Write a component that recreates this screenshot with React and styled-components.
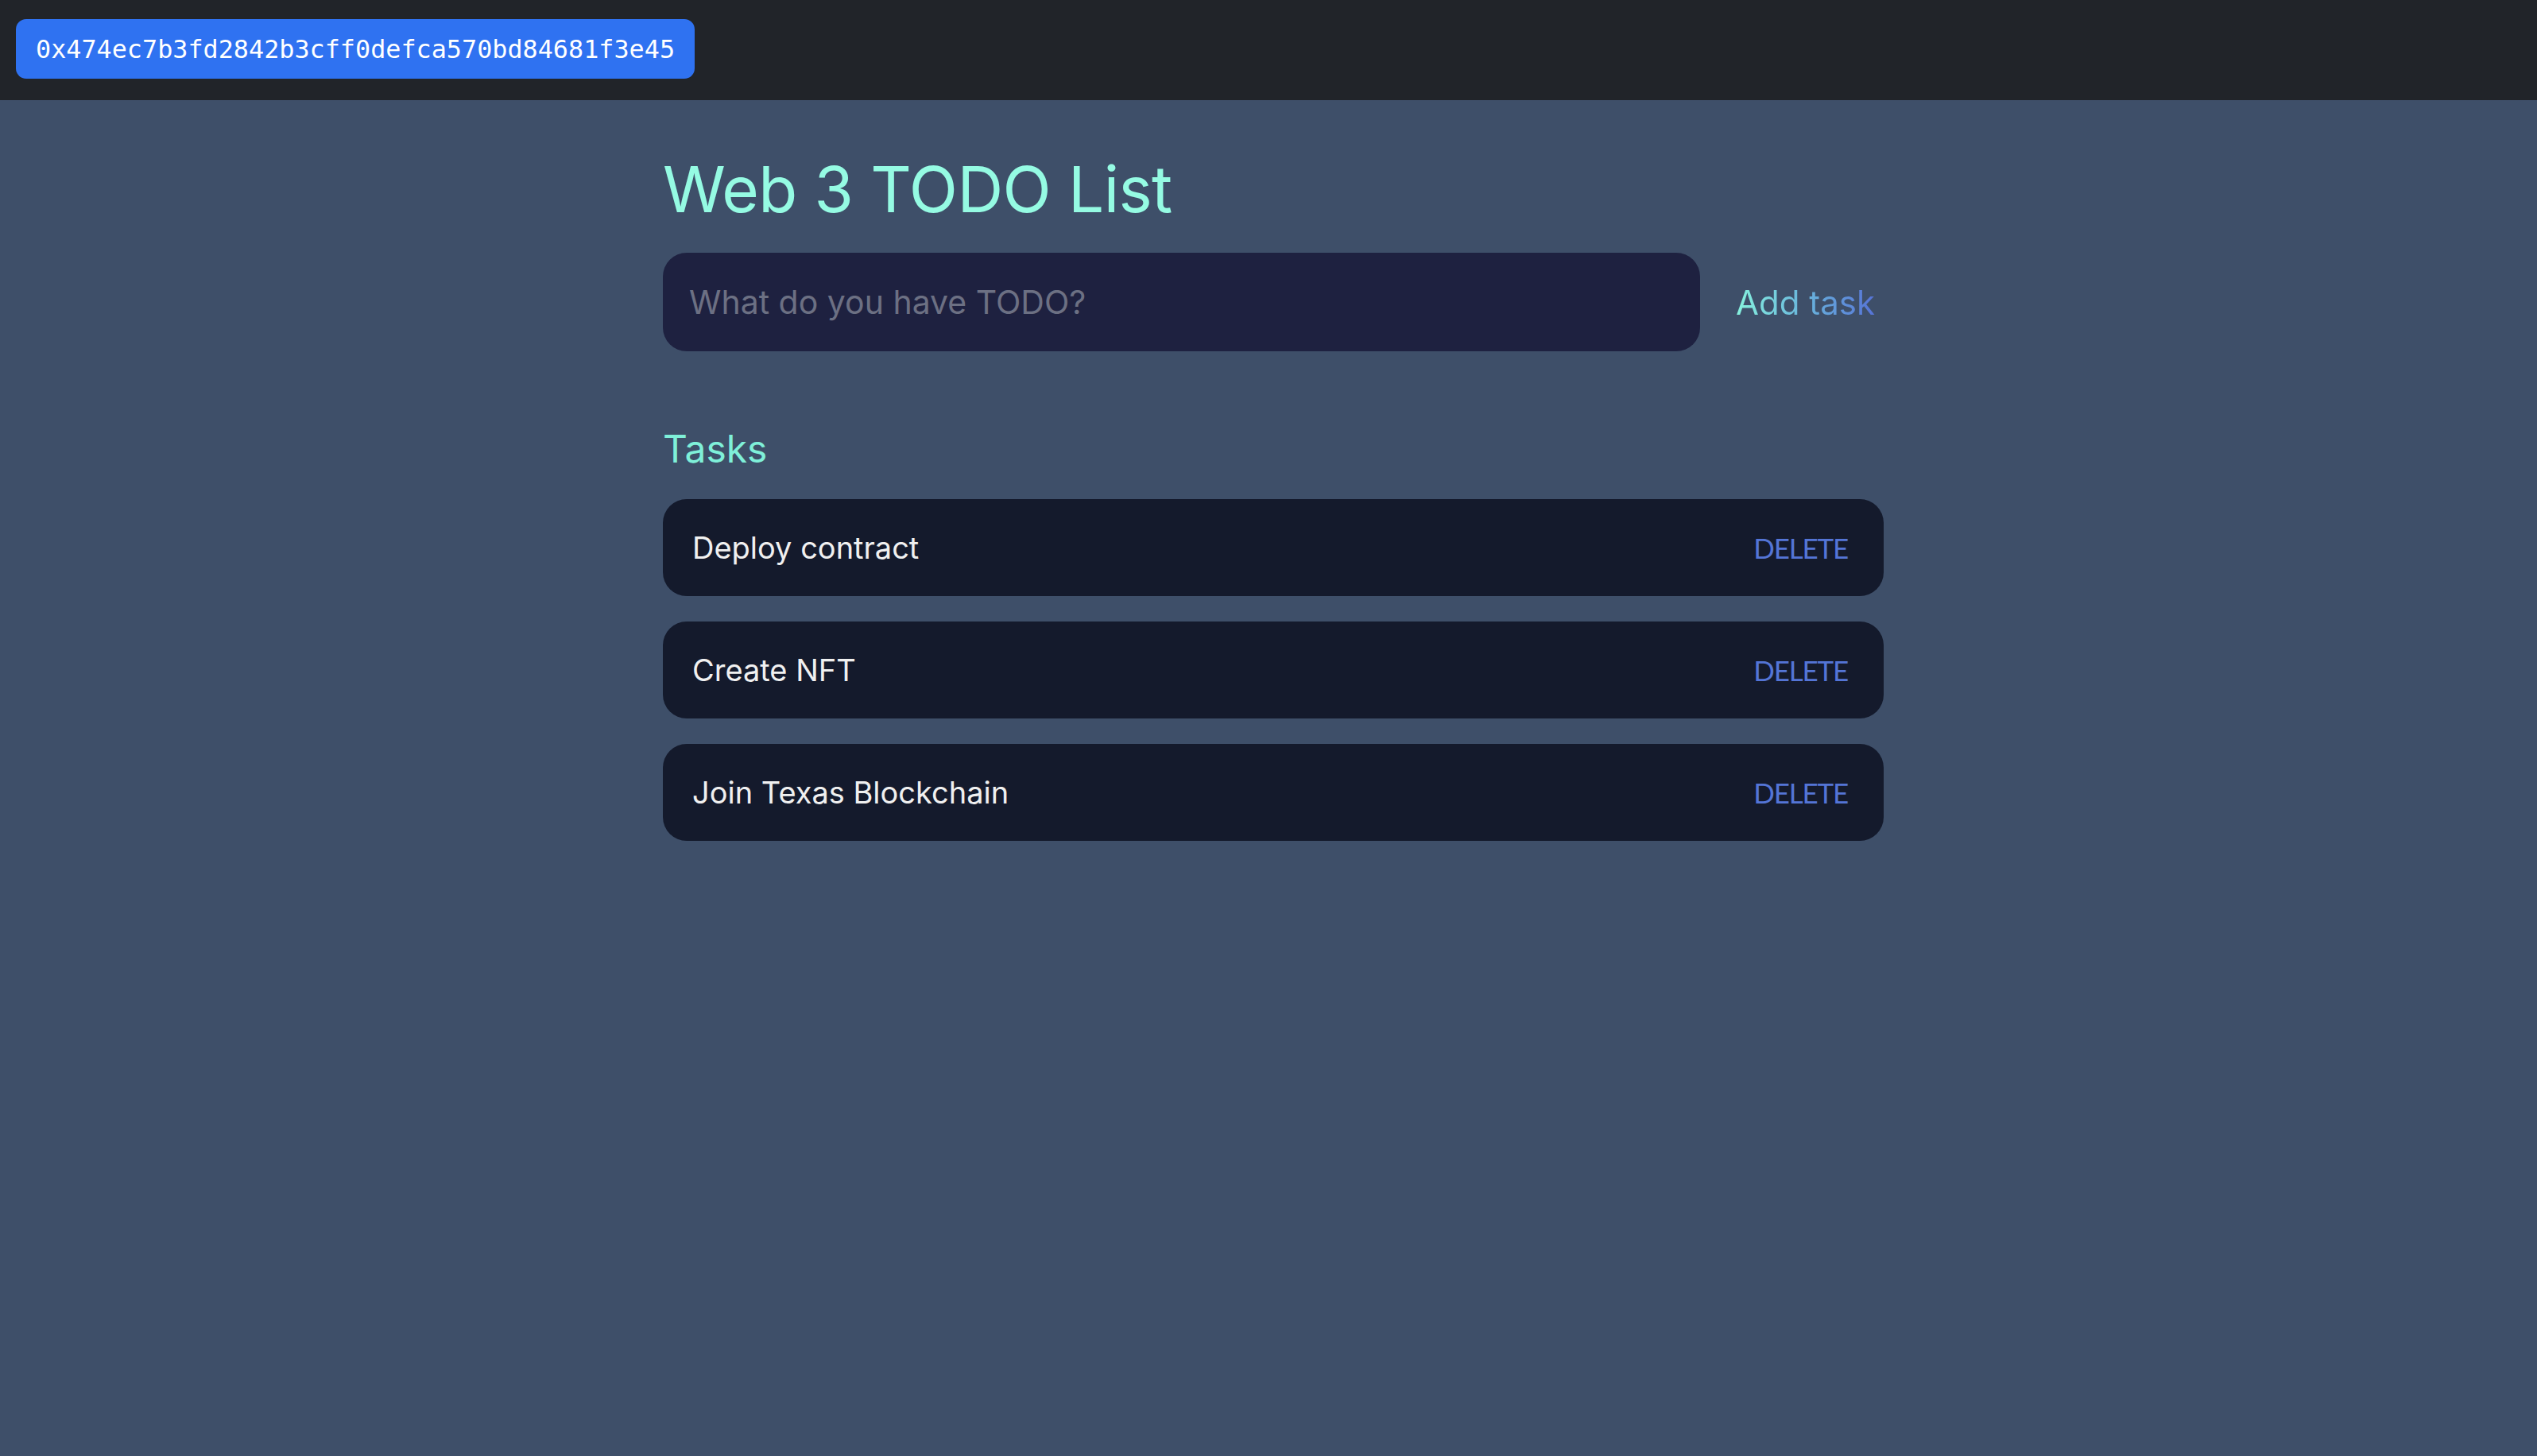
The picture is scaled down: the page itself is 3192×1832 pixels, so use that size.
import React, { useState } from "react";
import styled, { createGlobalStyle } from "styled-components";

const GlobalStyle = createGlobalStyle`
  html, body {
    margin: 0;
    padding: 0;
    background: #3e4f69;
    font-family: Inter, "Open Sans", sans-serif;
  }
  * { box-sizing: border-box; }
`;

const Page = styled.div`
  min-height: 100vh;
  background: #3e4f69;
`;

const Header = styled.header`
  height: 126px;
  background: #212429;
  display: flex;
  align-items: flex-start;
  padding: 24px 20px 0;
`;

const AccountButton = styled.button`
  height: 75px;
  padding: 0 25px;
  border: none;
  border-radius: 13px;
  background: #2f72f1;
  color: #ffffff;
  font-family: "DejaVu Sans Mono", "Liberation Mono", monospace;
  font-size: 31.8px;
  cursor: pointer;
`;

const Body = styled.div`
  padding-left: 12px;
`;

const Main = styled.main`
  width: 1536px;
  margin: 0 auto;
  padding-top: 72px;
`;

const Title = styled.h1`
  margin: 0;
  font-size: 80px;
  line-height: 1;
  font-weight: 400;
  color: #95fbe3;
  letter-spacing: -0.6px;
`;

const InputRow = styled.div`
  display: flex;
  align-items: center;
  margin-top: 40px;
`;

const TaskInput = styled.input`
  width: 1305px;
  height: 124px;
  border: none;
  outline: none;
  border-radius: 30px;
  background: #1e2140;
  padding: 0 33px;
  font-family: Inter, "Open Sans", sans-serif;
  font-size: 41px;
  color: #ffffff;

  &::placeholder {
    color: #6c7083;
  }
`;

const AddButton = styled.button`
  margin-left: 45px;
  padding: 0;
  border: none;
  background: linear-gradient(90deg, #86f2de 0%, #69b4dc 50%, #5673d6 100%);
  -webkit-background-clip: text;
  background-clip: text;
  color: transparent;
  font-family: Inter, "Open Sans", sans-serif;
  font-size: 42px;
  cursor: pointer;
`;

const SectionTitle = styled.h2`
  margin: 99px 0 0;
  font-size: 48px;
  line-height: 1;
  font-weight: 400;
  color: #7ff0d9;
`;

const TaskList = styled.ul`
  list-style: none;
  margin: 39px 0 0;
  padding: 0;
  display: flex;
  flex-direction: column;
  gap: 32px;
`;

const TaskRow = styled.li`
  height: 122px;
  border-radius: 30px;
  background: #141a2c;
  display: flex;
  align-items: center;
  justify-content: space-between;
  padding: 0 45px 0 37px;
`;

const TaskText = styled.span`
  color: #f0f0f0;
  font-size: 38px;
`;

const DeleteButton = styled.button`
  border: none;
  background: none;
  padding: 0;
  color: #5475d6;
  font-family: Lato, "Open Sans", sans-serif;
  font-size: 35px;
  letter-spacing: -1.2px;
  cursor: pointer;
`;

const initialTasks = [
  { id: 1, text: "Deploy contract" },
  { id: 2, text: "Create NFT" },
  { id: 3, text: "Join Texas Blockchain" },
];

export default function App() {
  const [tasks, setTasks] = useState(initialTasks);
  const [input, setInput] = useState("");

  const addTask = () => {
    if (!input.trim()) return;
    setTasks([...tasks, { id: Date.now(), text: input }]);
    setInput("");
  };

  return (
    <Page>
      <GlobalStyle />
      <Header>
        <AccountButton>0x474ec7b3fd2842b3cff0defca570bd84681f3e45</AccountButton>
      </Header>
      <Body>
        <Main>
          <Title>Web 3 TODO List</Title>
          <InputRow>
            <TaskInput
              placeholder="What do you have TODO?"
              value={input}
              onChange={(e) => setInput(e.target.value)}
            />
            <AddButton onClick={addTask}>Add task</AddButton>
          </InputRow>
          <SectionTitle>Tasks</SectionTitle>
          <TaskList>
            {tasks.map((task) => (
              <TaskRow key={task.id}>
                <TaskText>{task.text}</TaskText>
                <DeleteButton
                  onClick={() => setTasks(tasks.filter((t) => t.id !== task.id))}
                >
                  DELETE
                </DeleteButton>
              </TaskRow>
            ))}
          </TaskList>
        </Main>
      </Body>
    </Page>
  );
}
